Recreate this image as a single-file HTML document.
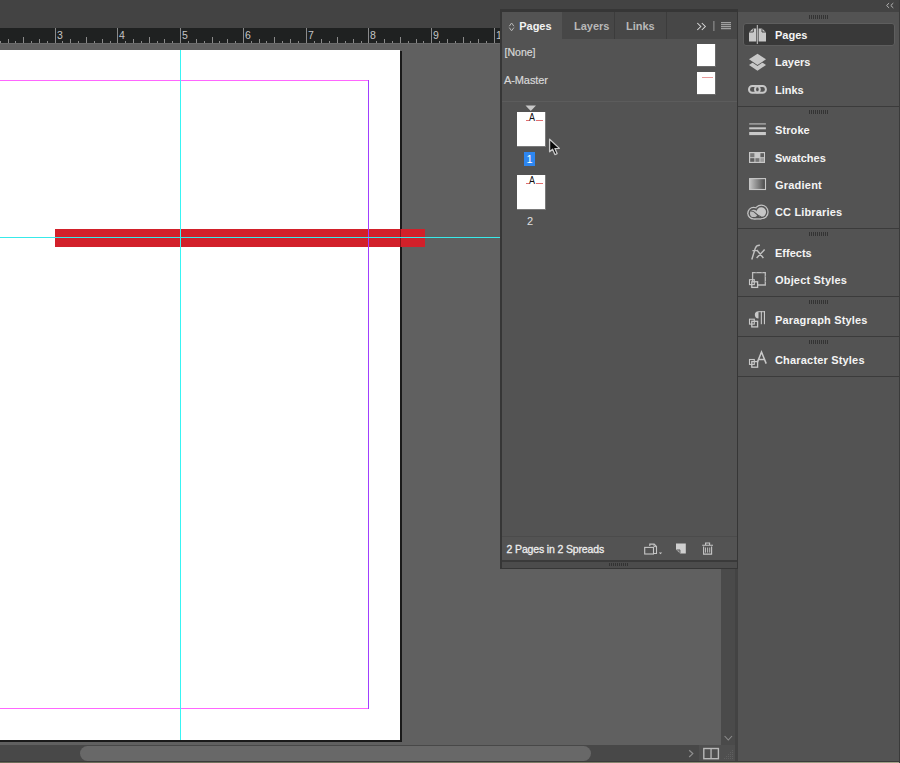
<!DOCTYPE html>
<html><head><meta charset="utf-8"><style>
html,body{margin:0;padding:0;width:900px;height:763px;overflow:hidden;background:#434343}
body{position:relative;font-family:"Liberation Sans", sans-serif}
div{position:absolute;box-sizing:border-box}
.t{white-space:nowrap}
</style></head><body>
<div style="left:0px;top:0px;width:900px;height:763px;background:#434343;"></div>
<div style="left:0px;top:43px;width:736px;height:702px;background:#606060;"></div>
<div style="left:721px;top:43px;width:14px;height:702px;background:#4a4a4a;"></div>
<div style="left:735px;top:0px;width:3px;height:763px;background:#434343;"></div>
<svg width="736" height="763" style="position:absolute;left:0;top:0" shape-rendering="crispEdges">
<rect x="0" y="28" width="736" height="15" fill="#1f2121"/>
<path d="M0 41h1v2h-1zM8 39h1v4h-1zM15 41h1v2h-1zM23 37h1v6h-1zM31 41h1v2h-1zM39 39h1v4h-1zM47 41h1v2h-1zM55 28h1v15h-1zM62 41h1v2h-1zM70 39h1v4h-1zM78 41h1v2h-1zM86 37h1v6h-1zM94 41h1v2h-1zM102 39h1v4h-1zM110 41h1v2h-1zM117 28h1v15h-1zM125 41h1v2h-1zM133 39h1v4h-1zM141 41h1v2h-1zM149 37h1v6h-1zM157 41h1v2h-1zM164 39h1v4h-1zM172 41h1v2h-1zM180 28h1v15h-1zM188 41h1v2h-1zM196 39h1v4h-1zM204 41h1v2h-1zM212 37h1v6h-1zM219 41h1v2h-1zM227 39h1v4h-1zM235 41h1v2h-1zM243 28h1v15h-1zM251 41h1v2h-1zM259 39h1v4h-1zM266 41h1v2h-1zM274 37h1v6h-1zM282 41h1v2h-1zM290 39h1v4h-1zM298 41h1v2h-1zM306 28h1v15h-1zM314 41h1v2h-1zM321 39h1v4h-1zM329 41h1v2h-1zM337 37h1v6h-1zM345 41h1v2h-1zM353 39h1v4h-1zM361 41h1v2h-1zM368 28h1v15h-1zM376 41h1v2h-1zM384 39h1v4h-1zM392 41h1v2h-1zM400 37h1v6h-1zM408 41h1v2h-1zM416 39h1v4h-1zM423 41h1v2h-1zM431 28h1v15h-1zM439 41h1v2h-1zM447 39h1v4h-1zM455 41h1v2h-1zM463 37h1v6h-1zM470 41h1v2h-1zM478 39h1v4h-1zM486 41h1v2h-1zM494 28h1v15h-1zM502 41h1v2h-1zM510 39h1v4h-1zM518 41h1v2h-1zM525 37h1v6h-1zM533 41h1v2h-1zM541 39h1v4h-1zM549 41h1v2h-1zM557 28h1v15h-1zM565 41h1v2h-1zM572 39h1v4h-1zM580 41h1v2h-1zM588 37h1v6h-1zM596 41h1v2h-1zM604 39h1v4h-1zM612 41h1v2h-1z" fill="#8a8a8a"/>
<rect x="0" y="43" width="736" height="1" fill="#6b6b6b"/>
</svg>
<div class="t" style="left:57px;top:29.51px;font-size:10.5px;line-height:10.5px;font-weight:normal;color:#c4c4c4;letter-spacing:0px;">3</div>
<div class="t" style="left:119px;top:29.51px;font-size:10.5px;line-height:10.5px;font-weight:normal;color:#c4c4c4;letter-spacing:0px;">4</div>
<div class="t" style="left:182px;top:29.51px;font-size:10.5px;line-height:10.5px;font-weight:normal;color:#c4c4c4;letter-spacing:0px;">5</div>
<div class="t" style="left:245px;top:29.51px;font-size:10.5px;line-height:10.5px;font-weight:normal;color:#c4c4c4;letter-spacing:0px;">6</div>
<div class="t" style="left:308px;top:29.51px;font-size:10.5px;line-height:10.5px;font-weight:normal;color:#c4c4c4;letter-spacing:0px;">7</div>
<div class="t" style="left:370px;top:29.51px;font-size:10.5px;line-height:10.5px;font-weight:normal;color:#c4c4c4;letter-spacing:0px;">8</div>
<div class="t" style="left:433px;top:29.51px;font-size:10.5px;line-height:10.5px;font-weight:normal;color:#c4c4c4;letter-spacing:0px;">9</div>
<div class="t" style="left:496px;top:29.51px;font-size:10.5px;line-height:10.5px;font-weight:normal;color:#c4c4c4;letter-spacing:0px;">1</div>
<div class="t" style="left:559px;top:29.51px;font-size:10.5px;line-height:10.5px;font-weight:normal;color:#c4c4c4;letter-spacing:0px;">1</div>
<div style="left:0px;top:51px;width:402px;height:690.5px;background:#1a1a1a;"></div>
<div style="left:0px;top:50px;width:400px;height:689.5px;background:#ffffff;"></div>
<div style="left:0px;top:80px;width:368px;height:1px;background:#ff66ff;"></div>
<div style="left:0px;top:708px;width:368px;height:1px;background:#ff66ff;"></div>
<div style="left:55px;top:229px;width:370px;height:17.5px;background:#d2202a;"></div>
<div style="left:400px;top:229px;width:1px;height:17.5px;background:rgba(0,0,0,0.35);"></div>
<div style="left:368px;top:80px;width:1px;height:629px;background:#a040ff;"></div>
<div style="left:180px;top:50px;width:1px;height:689.5px;background:#38f4f4;"></div>
<div style="left:0px;top:237px;width:736px;height:1px;background:#38eaea;"></div>
<div style="left:0px;top:745px;width:735px;height:16px;background:#484848;"></div>
<div style="left:699px;top:745px;width:36px;height:16px;background:#4f4f4f;"></div>
<div style="left:80px;top:746px;width:511px;height:15px;background:#686868;border-radius:7.5px"></div>
<div style="left:0px;top:761px;width:900px;height:1px;background:#3a3a3a;"></div>
<div style="left:0;top:762px;width:900px;height:1px;background:linear-gradient(90deg,#6b6b58,#7c7b66 60%,#a4a38a)"></div>
<svg style="position:absolute;left:680px;top:730px" width="56" height="32" viewBox="680 730 56 32"><path d="M724.6 736 L728.3 740 L732 736" fill="none" stroke="#8c8c8c" stroke-width="1.1"/><path d="M689.2 750.2 L692.8 753.6 L689.2 757" fill="none" stroke="#8e8e8e" stroke-width="1.2"/><rect x="703.8" y="748.5" width="14.6" height="10.2" fill="none" stroke="#b8b8b8" stroke-width="1.4"/><rect x="710.4" y="748.5" width="1.3" height="10.2" fill="#b8b8b8"/><g fill="#5f5f5f"><rect x="732" y="750" width="1" height="1"/><rect x="730" y="752" width="1" height="1"/><rect x="732" y="752" width="1" height="1"/><rect x="728" y="754" width="1" height="1"/><rect x="730" y="754" width="1" height="1"/><rect x="732" y="754" width="1" height="1"/><rect x="726" y="756" width="1" height="1"/><rect x="728" y="756" width="1" height="1"/><rect x="730" y="756" width="1" height="1"/><rect x="732" y="756" width="1" height="1"/><rect x="724" y="758" width="1" height="1"/><rect x="726" y="758" width="1" height="1"/><rect x="728" y="758" width="1" height="1"/><rect x="730" y="758" width="1" height="1"/><rect x="732" y="758" width="1" height="1"/></g></svg>
<div style="left:500px;top:9px;width:238px;height:560px;background:#363636;"></div>
<div style="left:502px;top:12px;width:234.5px;height:26.5px;background:#474747;"></div>
<div style="left:502px;top:12px;width:60px;height:27px;background:#535353;"></div>
<div style="left:614px;top:12px;width:1px;height:26.5px;background:#3c3c3c;"></div>
<div style="left:666px;top:12px;width:1px;height:26.5px;background:#3c3c3c;"></div>
<div style="left:502px;top:38.5px;width:234.5px;height:521.5px;background:#535353;"></div>
<div class="t" style="left:519.3px;top:20.89px;font-size:11px;line-height:11px;font-weight:bold;color:#f2f2f2;letter-spacing:-0.05px;">Pages</div>
<div class="t" style="left:574px;top:20.89px;font-size:11px;line-height:11px;font-weight:bold;color:#b8b8b8;letter-spacing:0px;">Layers</div>
<div class="t" style="left:626px;top:20.89px;font-size:11px;line-height:11px;font-weight:bold;color:#b8b8b8;letter-spacing:0px;">Links</div>
<svg style="position:absolute;left:508px;top:22px" width="8" height="10" viewBox="0 0 8 10"><path d="M1.3 4.2 L3.6 1 L5.9 4.2 M1.3 5.6 L3.6 8.8 L5.9 5.6" fill="none" stroke="#b8b8b8" stroke-width="1"/></svg>
<svg style="position:absolute;left:696px;top:21px" width="38" height="12" viewBox="0 0 38 12"><path d="M1.3 2 L4.8 5.5 L1.3 9 M5.8 2 L9.3 5.5 L5.8 9" fill="none" stroke="#dcdcdc" stroke-width="1.05"/><rect x="17.4" y="-1" width="1" height="11" fill="#9a9a9a"/><path d="M25 1.6h10M25 3.6h10M25 5.6h10M25 7.6h10" stroke="#a0a0a0" stroke-width="1.4"/></svg>
<div class="t" style="left:504.6px;top:47.11px;font-size:10.5px;line-height:10.5px;font-weight:normal;color:#d8d8d8;letter-spacing:0px;-webkit-text-stroke:0.2px #d8d8d8">[None]</div>
<div class="t" style="left:504px;top:74.89px;font-size:11px;line-height:11px;font-weight:normal;color:#d8d8d8;letter-spacing:-0.1px;-webkit-text-stroke:0.2px #d8d8d8">A-Master</div>
<div style="left:696.5px;top:43.5px;width:19px;height:23px;background:#6a6a6a;"></div>
<div style="left:697px;top:44px;width:18px;height:22px;background:#ffffff;"></div>
<div style="left:696.5px;top:71.5px;width:19px;height:23px;background:#6a6a6a;"></div>
<div style="left:697px;top:72px;width:18px;height:22px;background:#ffffff;"></div>
<div style="left:702px;top:77px;width:11px;height:1px;background:#e89a9a;"></div>
<div style="left:502px;top:100.5px;width:234.5px;height:1.5px;background:#5c5c5c;"></div>
<svg style="position:absolute;left:525px;top:105px" width="12" height="7" viewBox="0 0 12 7"><path d="M0.5 0.5 L11 0.5 L5.75 6 Z" fill="#c8c8c8"/></svg>
<div style="left:516.5px;top:111.5px;width:29px;height:35px;background:#7a7a7a;"></div>
<div style="left:517px;top:112px;width:28px;height:34px;background:#ffffff;"></div>
<div style="left:526px;top:120px;width:2.5px;height:1px;background:#e07070;"></div>
<div style="left:535.5px;top:120px;width:7.5px;height:1px;background:#e07070;"></div>
<div class="t" style="left:528.8px;top:113.13px;font-size:10px;line-height:10px;font-weight:normal;color:#111;letter-spacing:0px;transform:scaleX(0.9);transform-origin:left">A</div>
<div style="left:524px;top:152px;width:11px;height:14px;background:#2d86f0;"></div>
<div class="t" style="left:526.5px;top:154.19px;font-size:11px;line-height:11px;font-weight:normal;color:#ffffff;letter-spacing:0px;">1</div>
<div style="left:516.5px;top:174.5px;width:29px;height:35px;background:#7a7a7a;"></div>
<div style="left:517px;top:175px;width:28px;height:34px;background:#ffffff;"></div>
<div style="left:526px;top:183px;width:2.5px;height:1px;background:#e07070;"></div>
<div style="left:535.5px;top:183px;width:7.5px;height:1px;background:#e07070;"></div>
<div class="t" style="left:528.8px;top:175.73px;font-size:10px;line-height:10px;font-weight:normal;color:#111;letter-spacing:0px;transform:scaleX(0.9);transform-origin:left">A</div>
<div class="t" style="left:527px;top:216.19px;font-size:11px;line-height:11px;font-weight:normal;color:#e0e0e0;letter-spacing:0px;">2</div>
<svg style="position:absolute;left:540px;top:132px" width="26" height="28" viewBox="540 132 26 28"><path d="M549.6 139.2 L549.6 151.8 L552.6 149.2 L554.9 154.6 L557.1 153.6 L554.9 148.6 L559.4 148.4 Z" fill="#0a0a0a" stroke="#c8c8c8" stroke-width="1.3" stroke-linejoin="round"/></svg>
<div style="left:502px;top:536px;width:234.5px;height:1px;background:#4b4b4b;"></div>
<div class="t" style="left:506.6px;top:544.31px;font-size:10.5px;line-height:10.5px;font-weight:normal;color:#ececec;letter-spacing:-0.15px;-webkit-text-stroke:0.3px #ececec">2 Pages in 2 Spreads</div>
<svg style="position:absolute;left:640px;top:538px" width="76" height="22" viewBox="640 538 76 22"><g fill="none" stroke="#c6c6c6" stroke-width="1.1"><path d="M649.8 546 V544.1 H654.2 L656.5 546.4 V553.5 H654"/><path d="M654 544.1 V546.6 H656.5" stroke-width="0.9"/><rect x="644.7" y="547.4" width="8.8" height="6.6"/></g><path d="M658.8 552.4 H662.2 L660.5 554.3 Z" fill="#c6c6c6"/><path d="M676 543.5 H685.8 V553.6 H680.2 L676 549.4 Z" fill="#cfcfcf"/><path d="M676.6 549.9 H680 V553.2" fill="#9a9a9a" stroke="#535353" stroke-width="0.8"/><g fill="none" stroke="#c6c6c6" stroke-width="1.1"><path d="M702.2 545.2 H713 M705.6 545.2 V543 H709.6 V545.2"/><path d="M703.6 546.5 V554.1 H711.6 V546.5"/></g><path d="M705.5 547.5 V552.6 M707.6 547.5 V552.6 M709.7 547.5 V552.6" stroke="#c6c6c6" stroke-width="0.9"/></svg>
<div style="left:502px;top:559.5px;width:234.5px;height:2.5px;background:#3a3a3a;"></div>
<div style="left:502px;top:562px;width:234.5px;height:5.7px;background:#4c4c4c;"></div>
<div style="left:609px;top:562.5px;width:1px;height:3px;background:#333;"></div>
<div style="left:611px;top:562.5px;width:1px;height:3px;background:#333;"></div>
<div style="left:613px;top:562.5px;width:1px;height:3px;background:#333;"></div>
<div style="left:615px;top:562.5px;width:1px;height:3px;background:#333;"></div>
<div style="left:617px;top:562.5px;width:1px;height:3px;background:#333;"></div>
<div style="left:619px;top:562.5px;width:1px;height:3px;background:#333;"></div>
<div style="left:621px;top:562.5px;width:1px;height:3px;background:#333;"></div>
<div style="left:623px;top:562.5px;width:1px;height:3px;background:#333;"></div>
<div style="left:625px;top:562.5px;width:1px;height:3px;background:#333;"></div>
<div style="left:627px;top:562.5px;width:1px;height:3px;background:#333;"></div>
<div style="left:738px;top:12px;width:161px;height:749px;background:#535353;"></div>
<div style="left:899px;top:0px;width:1px;height:763px;background:#3a3a3a;"></div>
<div style="left:809px;top:15px;width:1px;height:3.5px;background:#333333;"></div>
<div style="left:811px;top:15px;width:1px;height:3.5px;background:#333333;"></div>
<div style="left:813px;top:15px;width:1px;height:3.5px;background:#333333;"></div>
<div style="left:815px;top:15px;width:1px;height:3.5px;background:#333333;"></div>
<div style="left:817px;top:15px;width:1px;height:3.5px;background:#333333;"></div>
<div style="left:819px;top:15px;width:1px;height:3.5px;background:#333333;"></div>
<div style="left:821px;top:15px;width:1px;height:3.5px;background:#333333;"></div>
<div style="left:823px;top:15px;width:1px;height:3.5px;background:#333333;"></div>
<div style="left:825px;top:15px;width:1px;height:3.5px;background:#333333;"></div>
<div style="left:827px;top:15px;width:1px;height:3.5px;background:#333333;"></div>
<div style="left:742.5px;top:22.5px;width:152px;height:23px;background:#393939;border:1px solid #5e5e5e;border-radius:3px"></div>
<div style="left:738px;top:105.5px;width:161px;height:1.2px;background:#3b3b3b;"></div>
<div style="left:738px;top:227.5px;width:161px;height:1.2px;background:#3b3b3b;"></div>
<div style="left:738px;top:295.5px;width:161px;height:1.2px;background:#3b3b3b;"></div>
<div style="left:738px;top:335.5px;width:161px;height:1.2px;background:#3b3b3b;"></div>
<div style="left:738px;top:375.5px;width:161px;height:1.2px;background:#3b3b3b;"></div>
<div style="left:809px;top:110px;width:1px;height:3.5px;background:#333333;"></div>
<div style="left:811px;top:110px;width:1px;height:3.5px;background:#333333;"></div>
<div style="left:813px;top:110px;width:1px;height:3.5px;background:#333333;"></div>
<div style="left:815px;top:110px;width:1px;height:3.5px;background:#333333;"></div>
<div style="left:817px;top:110px;width:1px;height:3.5px;background:#333333;"></div>
<div style="left:819px;top:110px;width:1px;height:3.5px;background:#333333;"></div>
<div style="left:821px;top:110px;width:1px;height:3.5px;background:#333333;"></div>
<div style="left:823px;top:110px;width:1px;height:3.5px;background:#333333;"></div>
<div style="left:825px;top:110px;width:1px;height:3.5px;background:#333333;"></div>
<div style="left:827px;top:110px;width:1px;height:3.5px;background:#333333;"></div>
<div style="left:809px;top:232px;width:1px;height:3.5px;background:#333333;"></div>
<div style="left:811px;top:232px;width:1px;height:3.5px;background:#333333;"></div>
<div style="left:813px;top:232px;width:1px;height:3.5px;background:#333333;"></div>
<div style="left:815px;top:232px;width:1px;height:3.5px;background:#333333;"></div>
<div style="left:817px;top:232px;width:1px;height:3.5px;background:#333333;"></div>
<div style="left:819px;top:232px;width:1px;height:3.5px;background:#333333;"></div>
<div style="left:821px;top:232px;width:1px;height:3.5px;background:#333333;"></div>
<div style="left:823px;top:232px;width:1px;height:3.5px;background:#333333;"></div>
<div style="left:825px;top:232px;width:1px;height:3.5px;background:#333333;"></div>
<div style="left:827px;top:232px;width:1px;height:3.5px;background:#333333;"></div>
<div style="left:809px;top:300px;width:1px;height:3.5px;background:#333333;"></div>
<div style="left:811px;top:300px;width:1px;height:3.5px;background:#333333;"></div>
<div style="left:813px;top:300px;width:1px;height:3.5px;background:#333333;"></div>
<div style="left:815px;top:300px;width:1px;height:3.5px;background:#333333;"></div>
<div style="left:817px;top:300px;width:1px;height:3.5px;background:#333333;"></div>
<div style="left:819px;top:300px;width:1px;height:3.5px;background:#333333;"></div>
<div style="left:821px;top:300px;width:1px;height:3.5px;background:#333333;"></div>
<div style="left:823px;top:300px;width:1px;height:3.5px;background:#333333;"></div>
<div style="left:825px;top:300px;width:1px;height:3.5px;background:#333333;"></div>
<div style="left:827px;top:300px;width:1px;height:3.5px;background:#333333;"></div>
<div style="left:809px;top:340px;width:1px;height:3.5px;background:#333333;"></div>
<div style="left:811px;top:340px;width:1px;height:3.5px;background:#333333;"></div>
<div style="left:813px;top:340px;width:1px;height:3.5px;background:#333333;"></div>
<div style="left:815px;top:340px;width:1px;height:3.5px;background:#333333;"></div>
<div style="left:817px;top:340px;width:1px;height:3.5px;background:#333333;"></div>
<div style="left:819px;top:340px;width:1px;height:3.5px;background:#333333;"></div>
<div style="left:821px;top:340px;width:1px;height:3.5px;background:#333333;"></div>
<div style="left:823px;top:340px;width:1px;height:3.5px;background:#333333;"></div>
<div style="left:825px;top:340px;width:1px;height:3.5px;background:#333333;"></div>
<div style="left:827px;top:340px;width:1px;height:3.5px;background:#333333;"></div>
<div class="t" style="left:775px;top:29.89px;font-size:11px;line-height:11px;font-weight:bold;color:#f4f4f4;letter-spacing:0px;">Pages</div>
<div class="t" style="left:775px;top:57.39px;font-size:11px;line-height:11px;font-weight:bold;color:#f4f4f4;letter-spacing:0px;">Layers</div>
<div class="t" style="left:775px;top:84.59px;font-size:11px;line-height:11px;font-weight:bold;color:#f4f4f4;letter-spacing:0px;">Links</div>
<div class="t" style="left:775px;top:124.89px;font-size:11px;line-height:11px;font-weight:bold;color:#f4f4f4;letter-spacing:0.1px;">Stroke</div>
<div class="t" style="left:775px;top:152.59px;font-size:11px;line-height:11px;font-weight:bold;color:#f4f4f4;letter-spacing:0px;">Swatches</div>
<div class="t" style="left:775px;top:179.59px;font-size:11px;line-height:11px;font-weight:bold;color:#f4f4f4;letter-spacing:0.22px;">Gradient</div>
<div class="t" style="left:775px;top:207.09px;font-size:11px;line-height:11px;font-weight:bold;color:#f4f4f4;letter-spacing:0.15px;">CC Libraries</div>
<div class="t" style="left:775px;top:247.59px;font-size:11px;line-height:11px;font-weight:bold;color:#f4f4f4;letter-spacing:0px;">Effects</div>
<div class="t" style="left:775px;top:274.99px;font-size:11px;line-height:11px;font-weight:bold;color:#f4f4f4;letter-spacing:0.18px;">Object Styles</div>
<div class="t" style="left:775px;top:315.29px;font-size:11px;line-height:11px;font-weight:bold;color:#f4f4f4;letter-spacing:0.17px;">Paragraph Styles</div>
<div class="t" style="left:775px;top:355.09px;font-size:11px;line-height:11px;font-weight:bold;color:#f4f4f4;letter-spacing:0.18px;">Character Styles</div>
<svg style="position:absolute;left:738px;top:12px" width="161" height="370" viewBox="738 12 161 370">
<g fill="#c8c8c8">
<!-- pages -->
<path d="M749 32.3 L753 28.6 L756.2 28.6 L756.2 41.6 L749 41.6 Z"/>
<path d="M758.6 28.6 L762 28.6 L766 32.3 L766 41.6 L758.6 41.6 Z"/>
<rect x="756.8" y="25" width="1" height="19"/>
<path d="M753.3 28.6 V32 H749" fill="none" stroke="#393939" stroke-width="0.9"/>
<path d="M762 28.6 V32 H766" fill="none" stroke="#393939" stroke-width="0.9"/>
<!-- layers -->
<path d="M749 65 L757.5 59.4 L766 65 L757.5 70.8 Z"/>
<path d="M749 59.3 L757.5 53.7 L766 59.3 L757.5 65 Z" stroke="#535353" stroke-width="1.6"/>
<path d="M749 59.3 L757.5 53.7 L766 59.3 L757.5 65 Z"/>
<!-- stroke -->
<rect x="749.2" y="123.2" width="16.7" height="1.4" fill="#a8a8a8"/>
<rect x="749.2" y="127.3" width="16.7" height="2"/>
<rect x="749.2" y="132" width="16.7" height="3.1"/>
<!-- swatches -->
<rect x="749" y="152" width="16" height="11"/>
<rect x="750.2" y="153.2" width="4.2" height="4" fill="#7a7a7a"/>
<rect x="755.4" y="153.2" width="4" height="4" fill="#cacaca"/>
<rect x="760.4" y="153.2" width="3.6" height="4" fill="#5e5e5e"/>
<rect x="750.2" y="158.2" width="4.2" height="3.6" fill="#5e5e5e"/>
<rect x="755.4" y="158.2" width="4" height="3.6" fill="#767676"/>
<rect x="760.4" y="158.2" width="3.6" height="3.6" fill="#9a9a9a"/>
</g>
<!-- gradient -->
<defs><linearGradient id="gr" x1="0" x2="1" y1="0" y2="0"><stop offset="0" stop-color="#c4c4c4"/><stop offset="1" stop-color="#484848"/></linearGradient></defs>
<rect x="749.6" y="178.6" width="15.9" height="10.9" fill="url(#gr)" stroke="#c8c8c8" stroke-width="1.1"/>
<!-- links -->
<rect x="749" y="86.1" width="10.8" height="6.6" rx="3.3" fill="none" stroke="#c8c8c8" stroke-width="2"/>
<rect x="755" y="86.1" width="10.9" height="6.6" rx="3.3" fill="none" stroke="#c8c8c8" stroke-width="2"/>
<!-- cc libraries -->
<g fill="#c2c2c2"><circle cx="753.6" cy="213.2" r="6.4"/><circle cx="761.3" cy="211.9" r="7.4"/><rect x="753.6" y="212" width="7.7" height="7.6"/></g>
<g fill="#535353"><circle cx="753.6" cy="213.2" r="5.1"/><circle cx="761.3" cy="211.9" r="6.1"/><rect x="753.6" y="212" width="7.7" height="6.3"/></g>
<circle cx="753.7" cy="213.4" r="3.7" fill="#bdbdbd"/>
<circle cx="761.3" cy="212.1" r="4.8" fill="#c6c6c6"/>
<path d="M750.6 211.3 C754.5 209.3 757 217.2 761.5 216.7" fill="none" stroke="#535353" stroke-width="1.1"/>
<!-- fx -->
<path d="M751.8 259.5 L755.3 248.2 Q756.4 245.1 759.9 245.3 M752.4 250.6 H757.6 M756.8 250 L763.4 258 M764.6 249.6 L756.6 258" fill="none" stroke="#c0c0c0" stroke-width="1.45"/>
<!-- object styles -->
<path d="M752.6 272.7 H765.3 V285 H752.6 Z" fill="none" stroke="#bdbdbd" stroke-width="1.3"/>
<g fill="#7a7a7a"><rect x="755.6" y="272.2" width="0.9" height="0.9"/><rect x="761.6" y="272.2" width="0.9" height="0.9"/><rect x="764.8" y="275.8" width="0.9" height="0.9"/><rect x="764.8" y="281.2" width="0.9" height="0.9"/></g>
<!-- small squares common -->
<g>
<rect x="751.8" y="281.8" width="5.8" height="5.6" fill="#535353" stroke="#c8c8c8" stroke-width="1.3"/>
<rect x="749.5" y="279.7" width="4.8" height="4.9" fill="none" stroke="#c8c8c8" stroke-width="1.1"/>
</g>
<!-- paragraph -->
<path d="M758.5 311.2 A3.6 3.6 0 0 0 758.5 318.5 Z" fill="#c8c8c8"/>
<rect x="758.2" y="311.2" width="6.8" height="1" fill="#c8c8c8"/>
<rect x="760.8" y="311.2" width="1.1" height="13" fill="#c8c8c8"/>
<rect x="763.9" y="311.2" width="1.1" height="13" fill="#c8c8c8"/>
<g transform="translate(0 39.5)"><rect x="751.8" y="281.8" width="5.8" height="5.6" fill="#535353" stroke="#c8c8c8" stroke-width="1.3"/>
<rect x="749.5" y="279.7" width="4.8" height="4.9" fill="none" stroke="#c8c8c8" stroke-width="1.1"/></g>
<!-- character -->
<path d="M756.8 363.6 L761.5 352 L766.2 363.6 M758.4 359.4 H764.6" fill="none" stroke="#c8c8c8" stroke-width="1.55"/>
<g transform="translate(0 79.8)"><rect x="751.8" y="281.8" width="5.8" height="5.6" fill="#535353" stroke="#c8c8c8" stroke-width="1.3"/>
<rect x="749.5" y="279.7" width="4.8" height="4.9" fill="none" stroke="#c8c8c8" stroke-width="1.1"/></g>
</svg>
<svg style="position:absolute;left:884px;top:1px" width="12" height="9" viewBox="884 1 12 9"><path d="M889.1 3.1 L886.6 5.5 L889.1 7.9 M893.3 3.1 L890.8 5.5 L893.3 7.9" fill="none" stroke="#b4b4b4" stroke-width="1"/></svg>
</body></html>
